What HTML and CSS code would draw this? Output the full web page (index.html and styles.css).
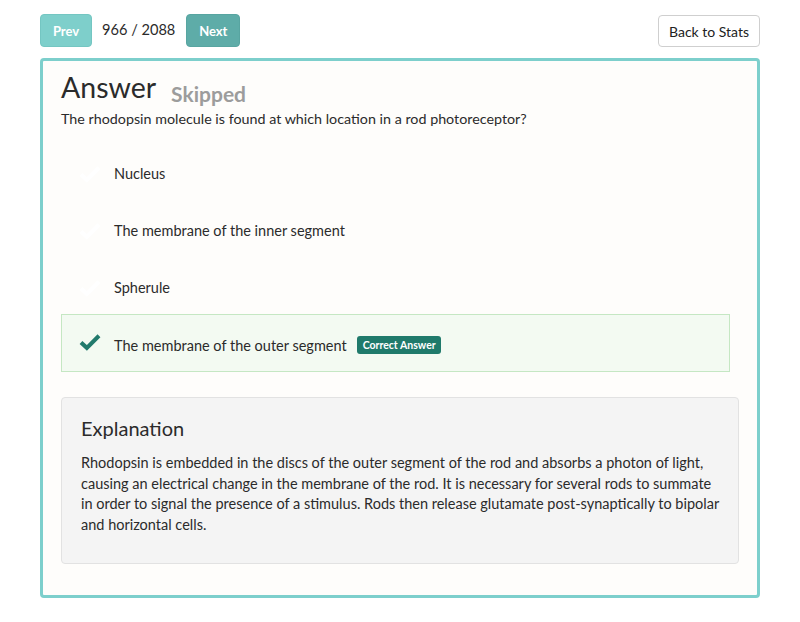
FILE: index.html
```html
<!DOCTYPE html>
<html>
<head>
<meta charset="utf-8">
<link rel="stylesheet" href="styles.css">
</head>
<body>
<div class="topbar">
  <div class="pager">
    <button class="btn btn-prev">Prev</button>
    <span class="count">966 / 2088</span>
    <button class="btn btn-next">Next</button>
  </div>
  <button class="btn btn-back">Back to Stats</button>
</div>
<div class="card">
  <div class="title-row">
    <h1 class="title">Answer</h1>
    <span class="status">Skipped</span>
  </div>
  <p class="question">The rhodopsin molecule is found at which location in a rod photoreceptor?</p>
  <ul class="options">
    <li class="option">
      <svg class="check" viewBox="0 0 24 20"><path d="M2 10.5 L8.5 16.5 L22 3" /></svg>
      <span>Nucleus</span>
    </li>
    <li class="option">
      <svg class="check" viewBox="0 0 24 20"><path d="M2 10.5 L8.5 16.5 L22 3" /></svg>
      <span>The membrane of the inner segment</span>
    </li>
    <li class="option">
      <svg class="check" viewBox="0 0 24 20"><path d="M2 10.5 L8.5 16.5 L22 3" /></svg>
      <span>Spherule</span>
    </li>
    <li class="option correct">
      <svg class="check" viewBox="0 0 24 20"><path d="M2 10.5 L8.5 16.5 L22 3" /></svg>
      <span>The membrane of the outer segment</span>
      <span class="badge">Correct Answer</span>
    </li>
  </ul>
  <div class="explanation">
    <h2 class="exp-title">Explanation</h2>
    <p class="exp-text">Rhodopsin is embedded in the discs of the outer segment of the rod and absorbs a photon of light, causing an electrical change in the membrane of the rod. It is necessary for several rods to summate in order to signal the presence of a stimulus. Rods then release glutamate post-synaptically to bipolar and horizontal cells.</p>
  </div>
</div>
</body>
</html>
```

FILE: styles.css
```css
* { box-sizing: border-box; }
body {
  margin: 0;
  padding: 14px 40px 0 40px;
  background: #ffffff;
  font-family: Lato, "Noto Sans", sans-serif;
  color: #2b2b2b;
}
.topbar {
  display: flex;
  justify-content: space-between;
  align-items: flex-start;
}
.pager {
  display: flex;
  align-items: center;
  gap: 10px;
}
.btn {
  font-family: inherit;
  border-radius: 4px;
  cursor: pointer;
}
.btn-prev, .btn-next {
  height: 33px;
  border: 1px solid transparent;
  color: #ffffff;
  font-weight: 700;
  font-size: 13px;
  padding: 0 11px;
}
.btn-prev { background: #7ecfcb; border-color: #74c6c2; width: 52px; }
.btn-next { background: #5eaca8; border-color: #58a5a1; width: 54px; margin-left: 1px; }
.count {
  font-size: 14.6px;
  color: #2b2b2b;
  margin-top: -3px;
}
.btn-back {
  margin-top: 1px;
  height: 32px;
  width: 102px;
  background: #ffffff;
  border: 1px solid #cfcfcf;
  color: #222;
  font-size: 14px;
  padding: 0;
}
.card {
  margin-top: 11px;
  border: 3px solid #7dcfcc;
  border-radius: 4px;
  background: #fefdfb;
  padding: 6px 18px 31px 18px;
  height: 540px;
}
.title-row {
  display: flex;
  align-items: baseline;
  gap: 15px;
}
.title {
  margin: 0;
  font-size: 28.5px;
  font-weight: 400;
  line-height: 40px;
  color: #2b2b2b;
}
.status {
  font-size: 21px;
  font-weight: 700;
  color: #9c9c9c;
  position: relative;
  top: 4px;
}
.question {
  margin: 0;
  font-size: 14.3px;
  line-height: 20px;
  margin-top: 2px;
}
.options {
  list-style: none;
  margin: 14px 9px 0 0;
  padding: 0;
}
.option {
  display: flex;
  align-items: center;
  height: 57px;
  padding: 4px 17px 0 17px;
  border: 1px solid transparent;
  font-size: 14.5px;
}
.option .check {
  width: 22px;
  height: 18px;
  margin-right: 13px;
  flex: none;
}
.check path {
  fill: none;
  stroke: #ffffff;
  stroke-width: 4.5;
  stroke-linecap: butt;
  stroke-linejoin: miter;
}
.option.correct {
  height: 58px;
  background: #f3faf2;
  border-color: #c5e7c3;
  padding-top: 4px;
}
.option.correct .check { margin-top: -6px; margin-right: 13px; }
.option.correct .check path { stroke: #217a6c; }
.badge {
  margin-left: 10px;
  background: #1f7a6b;
  color: #ffffff;
  font-size: 10.5px;
  font-weight: 700;
  padding: 3px 5px 3px 6px;
  border-radius: 3px;
  line-height: 12px;
}
.explanation {
  margin-top: 25px;
  background: #f4f4f4;
  border: 1px solid #e2e2e2;
  border-radius: 4px;
  padding: 15px 19px 28px 19px;
}
.exp-title {
  margin: 0;
  font-size: 20px;
  font-weight: 400;
  line-height: 30px;
  color: #2b2b2b;
}
.exp-text {
  margin: 10px 0 0 0;
  font-size: 14.5px;
  line-height: 20.5px;
  color: #2b2b2b;
}
```
